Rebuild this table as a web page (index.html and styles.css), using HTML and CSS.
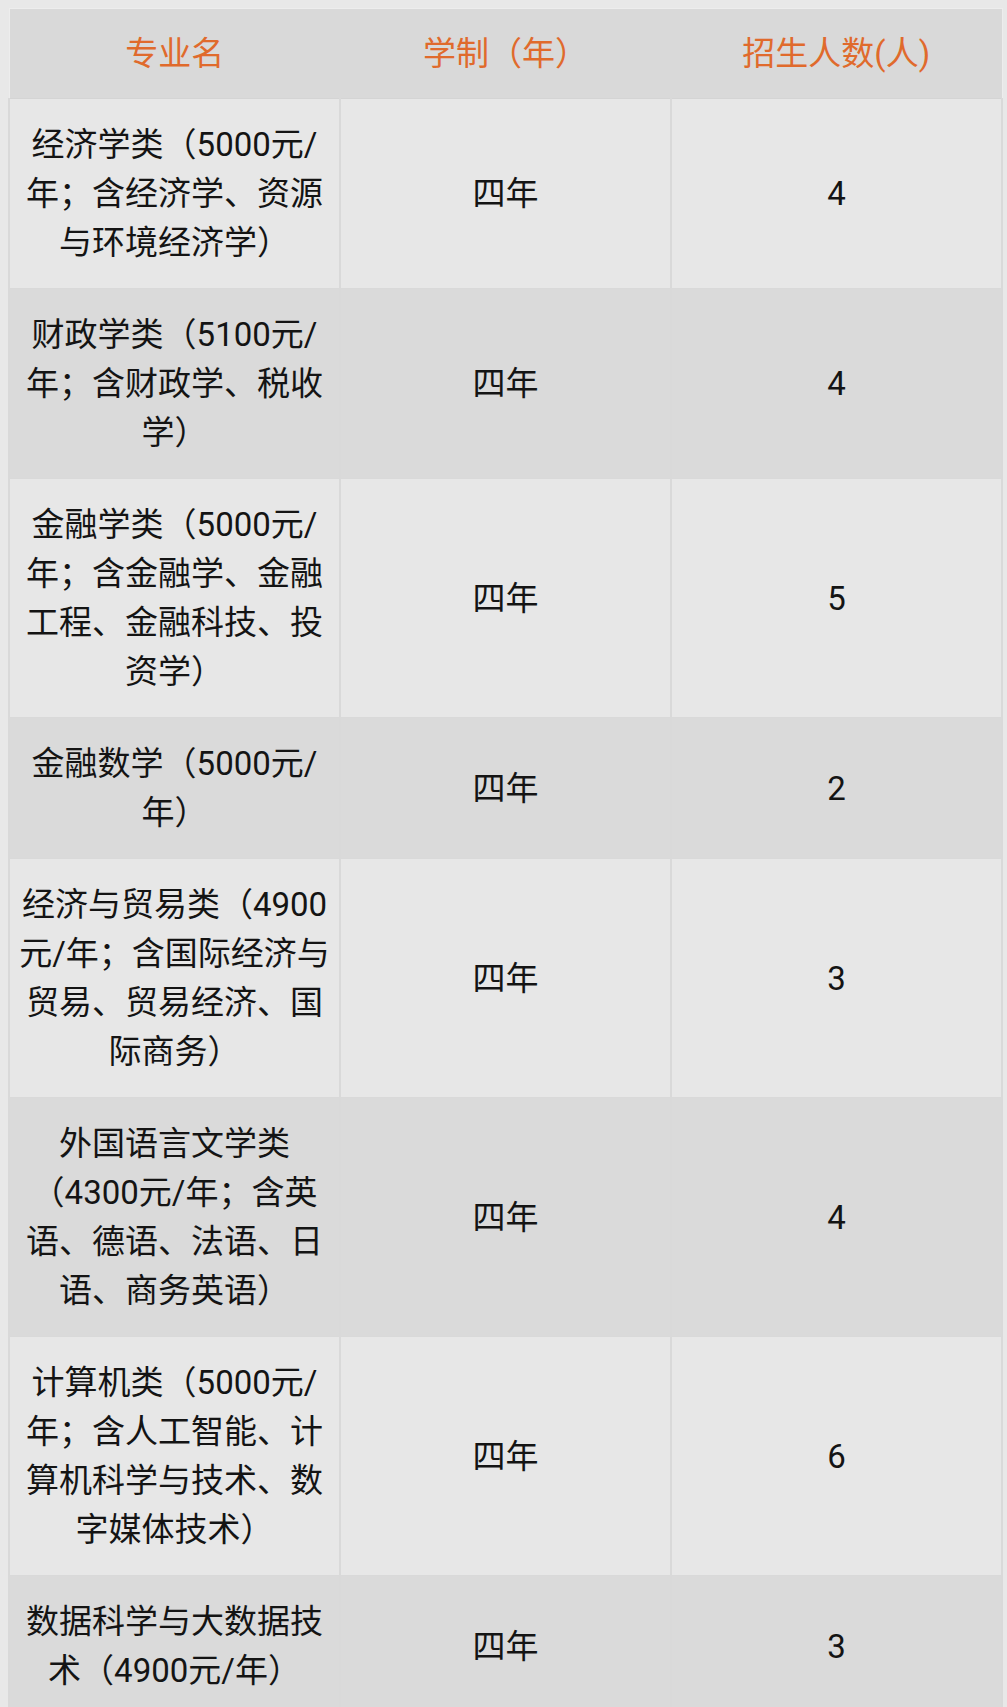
FILE: index.html
```html
<!DOCTYPE html>
<html lang="zh-CN">
<head>
<meta charset="utf-8">
<title>招生计划</title>
<link rel="stylesheet" href="styles.css">
</head>
<body>
<table class="plan">
  <colgroup><col class="c1"><col class="c2"><col class="c3"></colgroup>
  <thead>
    <tr><th>专业名</th><th>学制（年）</th><th>招生人数(人)</th></tr>
  </thead>
  <tbody>
    <tr><td>经济学类（5000元/<br>年；含经济学、资源<br>与环境经济学）</td><td>四年</td><td>4</td></tr>
    <tr><td>财政学类（5100元/<br>年；含财政学、税收<br>学）</td><td>四年</td><td>4</td></tr>
    <tr><td>金融学类（5000元/<br>年；含金融学、金融<br>工程、金融科技、投<br>资学）</td><td>四年</td><td>5</td></tr>
    <tr><td>金融数学（5000元/<br>年）</td><td>四年</td><td>2</td></tr>
    <tr><td>经济与贸易类（4900<br>元/年；含国际经济与<br>贸易、贸易经济、国<br>际商务）</td><td>四年</td><td>3</td></tr>
    <tr><td>外国语言文学类<br>（4300元/年；含英<br>语、德语、法语、日<br>语、商务英语）</td><td>四年</td><td>4</td></tr>
    <tr><td>计算机类（5000元/<br>年；含人工智能、计<br>算机科学与技术、数<br>字媒体技术）</td><td>四年</td><td>6</td></tr>
    <tr><td>数据科学与大数据技<br>术（4900元/年）</td><td>四年</td><td>3</td></tr>
  </tbody>
</table>
</body>
</html>
```

FILE: styles.css
```css
html, body {
  margin: 0;
  padding: 0;
  background: #e8e8e8;
}

body {
  padding: 8px 0 0 8px;
  font-family: Roboto, "Noto Sans CJK SC", sans-serif;
}

.plan {
  width: 995px;
  border-collapse: collapse;
  table-layout: fixed;
  border: 1px solid #ededed;
}

.c1, .c2, .c3 {
  width: 33.333%;
}

.plan th {
  background: #d9d9d9;
  color: #e06a2c;
  font-weight: normal;
  font-size: 33px;
  line-height: 49px;
  padding: 20px 6px;
  text-align: center;
  border-bottom: 1px solid #d4d4d4;
}

.plan td {
  font-size: 33px;
  line-height: 49px;
  color: #141414;
  text-align: center;
  vertical-align: middle;
  padding: 21px 4px;
  white-space: nowrap;
  border-left: 2px solid #d9d9d9;
  border-right: 2px solid #d9d9d9;
  border-bottom: 1px solid #d9d9d9;
}

.plan tbody tr:nth-child(odd) td {
  background: #e7e7e7;
}

.plan tbody tr:nth-child(even) td {
  background: #dadada;
}
```
